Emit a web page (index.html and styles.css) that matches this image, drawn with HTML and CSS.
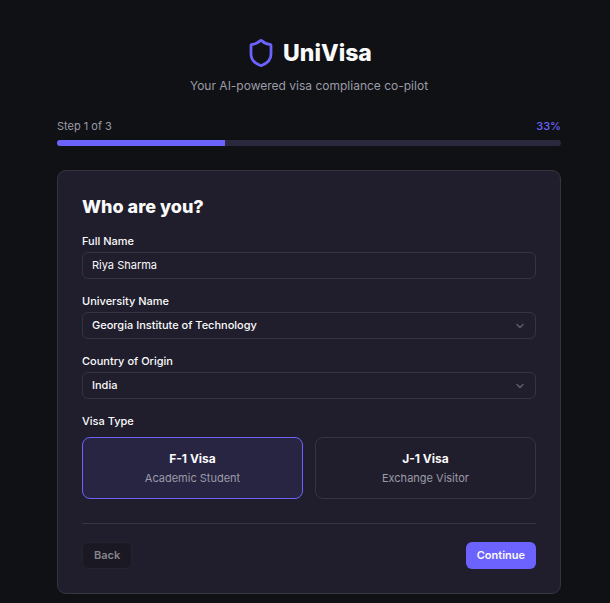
FILE: index.html
```html
<!DOCTYPE html>
<html lang="en">
<head>
    <meta charset="UTF-8">
    <meta name="viewport" content="width=device-width, initial-scale=1.0">
    <title>UniVisa - Onboarding</title>
    <link rel="stylesheet" href="styles.css">
</head>
<body>
    <main class="container">
        <header class="header">
            <div class="brand">
                <svg class="logo" viewBox="0 0 24 24" aria-hidden="true">
                    <path d="M20 13c0 5-3.5 7.5-7.66 8.95a1 1 0 0 1-.67-.01C7.5 20.5 4 18 4 13V6a1 1 0 0 1 1-1c2 0 4.5-1.2 6.24-2.72a1.17 1.17 0 0 1 1.52 0C14.51 3.81 17 5 19 5a1 1 0 0 1 1 1z"/>
                </svg>
                <h1>UniVisa</h1>
            </div>
            <p>Your AI-powered visa compliance co-pilot</p>
        </header>

        <div class="progress-info">
            <span>Step 1 of 3</span>
            <span class="percent">33%</span>
        </div>
        <div class="progress" role="progressbar" aria-valuenow="33" aria-valuemin="0" aria-valuemax="100">
            <div class="progress-fill" style="width: 33.33%"></div>
        </div>

        <form class="card">
            <h2>Who are you?</h2>

            <div class="field">
                <label for="name">Full Name</label>
                <input class="control" type="text" id="name" value="Riya Sharma">
            </div>

            <div class="field">
                <label for="university">University Name</label>
                <div class="select-box">
                    <select class="control" id="university">
                        <option>Georgia Institute of Technology</option>
                    </select>
                    <svg class="chevron" viewBox="0 0 24 24" aria-hidden="true"><path d="m6 9 6 6 6-6"/></svg>
                </div>
            </div>

            <div class="field">
                <label for="country">Country of Origin</label>
                <div class="select-box">
                    <select class="control" id="country">
                        <option>India</option>
                    </select>
                    <svg class="chevron" viewBox="0 0 24 24" aria-hidden="true"><path d="m6 9 6 6 6-6"/></svg>
                </div>
            </div>

            <fieldset class="visa-type">
                <legend>Visa Type</legend>
                <div class="options">
                    <label class="option">
                        <input type="radio" name="visa" value="F-1" checked>
                        <span class="option-title">F-1 Visa</span>
                        <span class="option-text">Academic Student</span>
                    </label>
                    <label class="option">
                        <input type="radio" name="visa" value="J-1">
                        <span class="option-title">J-1 Visa</span>
                        <span class="option-text">Exchange Visitor</span>
                    </label>
                </div>
            </fieldset>

            <div class="actions">
                <button type="button" class="btn btn-back" disabled>Back</button>
                <button type="button" class="btn btn-primary">Continue</button>
            </div>
        </form>
    </main>
</body>
</html>
```

FILE: styles.css
```css
* { box-sizing: border-box; }
body { margin: 0; padding: 37px 0 9px 8px; background: #101115; color: #fafafa; font-family: Inter, sans-serif; font-size: 11px; line-height: 16px; }
.container { max-width: 504px; margin: 0 auto; }

.header { text-align: center; margin-bottom: 23px; }
.brand { display: flex; align-items: center; justify-content: center; gap: 7px; }
.logo { width: 30px; height: 30px; fill: none; stroke: #6c63ff; stroke-width: 2.2; stroke-linecap: round; stroke-linejoin: round; }
h1 { margin: 0; font-size: 23px; line-height: 32px; font-weight: 800; }
.header p { margin: 8px 0 0; font-size: 12px; line-height: 18px; color: #9b9ba7; }

.progress-info { display: flex; justify-content: space-between; margin-bottom: 6px; color: #9b9ba7; }
.percent { color: #6c63ff; font-weight: 500; }
.progress { height: 6px; margin-bottom: 24px; border-radius: 3px; background: #2a283d; overflow: hidden; }
.progress-fill { height: 100%; background: #6c63ff; }

.card { padding: 24px; border: 1px solid #353441; border-radius: 9px; background: #201e2d; }
h2 { margin: 0 0 14px; font-size: 18px; line-height: 24px; font-weight: 800; }
.field { margin-bottom: 14px; }
.field label { display: block; margin-bottom: 3px; font-weight: 500; }
.control { display: block; width: 100%; height: 27px; padding: 0 9px 1px; border: 1px solid #353441; border-radius: 6px; background: transparent; color: #fafafa; font: inherit; }
select.control { appearance: none; font-weight: 500; }
.select-box { position: relative; }
.chevron { position: absolute; right: 10px; top: 8px; width: 12px; height: 12px; fill: none; stroke: #5d5b69; stroke-width: 3; stroke-linecap: round; stroke-linejoin: round; pointer-events: none; }

.visa-type { margin: 0; padding: 0; border: 0; }
.visa-type legend { padding: 0; margin-bottom: 8px; font-weight: 500; }
.options { display: grid; grid-template-columns: 1fr 1fr; gap: 12px; }
.option { position: relative; display: flex; flex-direction: column; align-items: center; gap: 2px; padding: 12px; border: 1px solid #353441; border-radius: 8px; cursor: pointer; }
.option input { position: absolute; opacity: 0; margin: 0; }
.option:has(input:checked) { border-color: #6c63ff; background: #272542; }
.option-title { font-size: 12px; line-height: 18px; font-weight: 700; }
.option-text { color: #9b9ba7; }

.actions { display: flex; justify-content: space-between; margin-top: 24px; padding-top: 18px; border-top: 1px solid #353441; }
.btn { height: 27px; padding: 0 11px 1px; border: 0; border-radius: 6px; font: inherit; font-weight: 600; cursor: pointer; }
.btn-back { border: 1px solid #24232e; background: #191823; color: #85848c; cursor: default; }
.btn-primary { background: #6c63ff; color: #fafafa; }
```
